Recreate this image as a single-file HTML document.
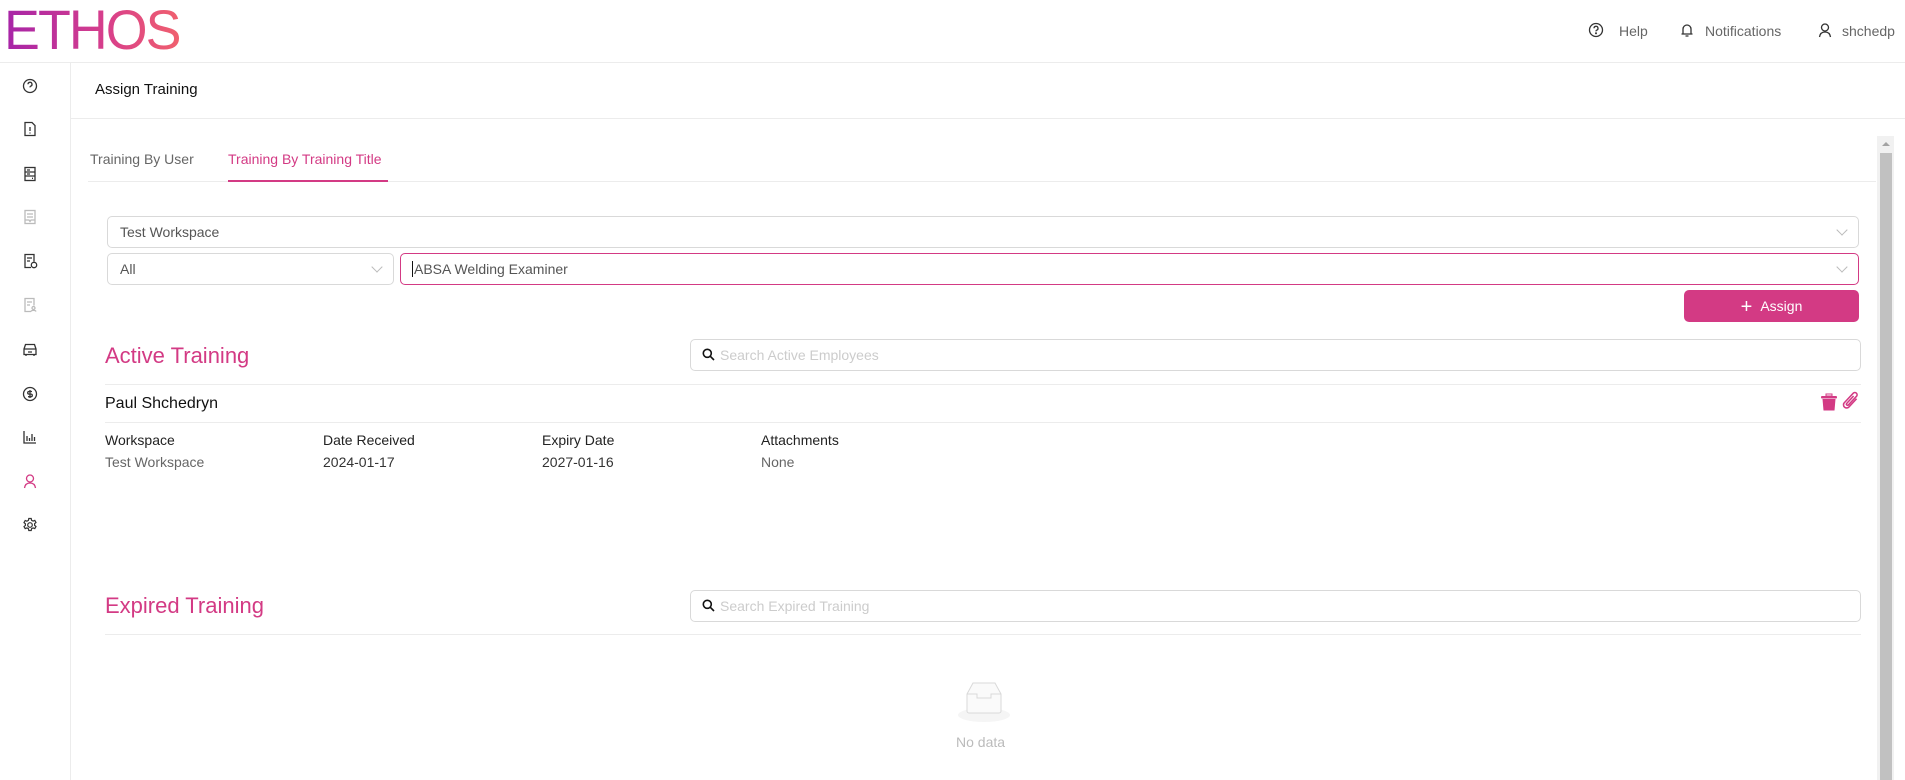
<!DOCTYPE html>
<html><head><meta charset="utf-8"><style>
*{box-sizing:border-box;margin:0;padding:0}
body{width:1905px;height:780px;overflow:hidden;background:#fff;font-family:"Liberation Sans",sans-serif;font-size:14px;color:#222;position:relative}
.a{position:absolute}
.line{position:absolute;height:1px;background:#ececec}
.box{position:absolute;border:1px solid #d9d9d9;border-radius:5px;background:#fff}
.chev{position:absolute;width:8px;height:8px;border-right:1px solid #bbb;border-bottom:1px solid #bbb;transform:rotate(45deg)}
.ico{position:absolute;left:22px}
.lbl{position:absolute;font-size:14px;color:#222}
.val{position:absolute;font-size:14px;color:#666}
</style></head><body>
<div class="a" style="left:4px;top:2px;font-size:56px;font-weight:400;letter-spacing:-2px;line-height:56px;background:linear-gradient(90deg,#a624a8,#d9408a 60%,#f0606e);-webkit-background-clip:text;background-clip:text;color:transparent;transform:scaleX(0.96);transform-origin:left">ETHOS</div>
<div class="line" style="left:0;top:62px;width:1905px"></div>
<div class="a" style="left:70px;top:62px;width:1px;height:718px;background:#ececec"></div>

<!-- header right -->
<svg class="a" style="left:1588px;top:22px" width="16" height="16" viewBox="0 0 16 16" fill="none" stroke="#333" stroke-width="1.3"><circle cx="8" cy="8" r="6.5"/><path d="M6 6.3a2 2 0 1 1 2.6 1.9c-.5.2-.6.6-.6 1.2"/><circle cx="8" cy="11.3" r=".4" fill="#333"/></svg>
<div class="a" style="left:1619px;top:23px;color:#666">Help</div>
<svg class="a" style="left:1679px;top:22px" width="16" height="16" viewBox="0 0 16 16" fill="none" stroke="#333" stroke-width="1.3"><path d="M4 12V7a4 4 0 0 1 8 0v5M2.5 12h11M6.5 14h3"/></svg>
<div class="a" style="left:1705px;top:23px;color:#666">Notifications</div>
<svg class="a" style="left:1817px;top:22px" width="16" height="16" viewBox="0 0 16 16" fill="none" stroke="#333" stroke-width="1.3"><circle cx="8" cy="5.5" r="3.5"/><path d="M2.5 15c.5-3.5 2.5-5 5.5-5s5 1.5 5.5 5"/></svg>
<div class="a" style="left:1842px;top:23px;color:#666">shchedp</div>

<!-- sidebar icons -->
<svg class="ico" style="top:78px" width="16" height="16" viewBox="0 0 16 16" fill="none" stroke="#333" stroke-width="1.3"><circle cx="8" cy="8" r="6.5"/><path d="M6 6.3a2 2 0 1 1 2.6 1.9c-.5.2-.6.6-.6 1.2"/></svg>
<svg class="ico" style="top:121px" width="16" height="16" viewBox="0 0 16 16" fill="none" stroke="#333" stroke-width="1.3"><path d="M3 1.5h7l3 3v10H3z M8 6v4M8 11.5v1"/></svg>
<svg class="ico" style="top:166px" width="16" height="16" viewBox="0 0 16 16" fill="none" stroke="#333" stroke-width="1.3"><rect x="3" y="1.5" width="10" height="13"/><path d="M3 6h10M3 10h10M5 4h3M5 8h3M10 12.3h1"/></svg>
<svg class="ico" style="top:209px" width="16" height="16" viewBox="0 0 16 16" fill="none" stroke="#bbb" stroke-width="1.3"><rect x="3" y="1.5" width="10" height="13"/><path d="M5 5h6M5 8h6M3 11h4l1 1.5 1-1.5h4"/></svg>
<svg class="ico" style="top:253px" width="16" height="16" viewBox="0 0 16 16" fill="none" stroke="#333" stroke-width="1.3"><path d="M9 14.5H3v-13h9v7M5 5h5M5 8h3"/><circle cx="12" cy="12" r="2.7"/></svg>
<svg class="ico" style="top:297px" width="16" height="16" viewBox="0 0 16 16" fill="none" stroke="#bbb" stroke-width="1.3"><path d="M9 14.5H3v-13h9v7M5 5h5M5 8h3"/><circle cx="11.5" cy="11" r="1.5"/><path d="M9 14.5c.5-1.5 4.5-1.5 5 0"/></svg>
<svg class="ico" style="top:341px" width="16" height="16" viewBox="0 0 16 16" fill="none" stroke="#333" stroke-width="1.3"><path d="M2 8l1.5-4.5h9L14 8v5.5H2zM2 8h12M4 13.5v1.5M12 13.5v1.5M6 11h4"/></svg>
<svg class="ico" style="top:386px" width="16" height="16" viewBox="0 0 16 16" fill="none" stroke="#333" stroke-width="1.3"><circle cx="8" cy="8" r="6.5"/><path d="M10 5.5H7a1.3 1.3 0 0 0 0 2.6h2a1.3 1.3 0 0 1 0 2.6H6M8 4v8"/></svg>
<svg class="ico" style="top:429px" width="16" height="16" viewBox="0 0 16 16" fill="none" stroke="#333" stroke-width="1.3"><path d="M2 2v12h12M5 12V7M7.5 12V9M10 12V5M12.5 12V8"/></svg>
<svg class="ico" style="top:473px" width="16" height="16" viewBox="0 0 16 16" fill="none" stroke="#d33a84" stroke-width="1.3"><circle cx="8" cy="5.5" r="3.5"/><path d="M2.5 15c.5-3.5 2.5-5 5.5-5s5 1.5 5.5 5"/></svg>
<svg class="ico" style="top:517px" width="16" height="16" viewBox="0 0 16 16" fill="none" stroke="#333" stroke-width="1.2"><circle cx="8" cy="8" r="2.3"/><path d="M6.8 1.5h2.4l.4 1.8 1.5.8 1.7-.7 1.2 2.1-1.4 1.2v1.6l1.4 1.2-1.2 2.1-1.700-.7-1.5.8-.4 1.8H6.8l-.4-1.8-1.5-.8-1.7.7L2 9.6l1.4-1.2V6.8L2 5.6l1.2-2.1 1.7.7 1.5-.8z"/></svg>

<!-- page title -->
<div class="a" style="left:95px;top:81px;font-size:15px;color:#111">Assign Training</div>
<div class="line" style="left:71px;top:118px;width:1834px"></div>

<!-- tabs -->
<div class="a" style="left:90px;top:151px;color:#666">Training By User</div>
<div class="a" style="left:228px;top:151px;color:#d33a84">Training By Training Title</div>
<div class="line" style="left:88px;top:181px;width:1788px"></div>
<div class="a" style="left:228px;top:180px;width:160px;height:2px;background:#d33a84"></div>

<!-- scrollbar -->
<div class="a" style="left:1877px;top:136px;width:17px;height:644px;background:#f1f1f1"></div>
<div class="a" style="left:1880px;top:153px;width:12px;height:627px;background:#c1c1c1"></div>
<div class="a" style="left:1882px;top:142px;width:0;height:0;border-left:4px solid transparent;border-right:4px solid transparent;border-bottom:4px solid #a3a3a3"></div>

<!-- selects -->
<div class="box" style="left:107px;top:216px;width:1752px;height:32px"></div>
<div class="a" style="left:120px;top:224px;color:#555">Test Workspace</div>
<div class="chev" style="left:1838px;top:226px"></div>
<div class="box" style="left:107px;top:253px;width:287px;height:32px"></div>
<div class="a" style="left:120px;top:261px;color:#555">All</div>
<div class="chev" style="left:373px;top:263px"></div>
<div class="box" style="left:400px;top:253px;width:1459px;height:32px;border-color:#d33a84"></div>
<div class="a" style="left:412px;top:261px;color:#555;border-left:1px solid #111;padding-left:1px">ABSA Welding Examiner</div>
<div class="chev" style="left:1838px;top:263px"></div>

<div class="a" style="left:1684px;top:290px;width:175px;height:32px;background:#d33a84;border-radius:5px;color:#fff;text-align:center;line-height:32px;font-size:14px"><span style="font-size:20px;vertical-align:-2px;margin-right:8px;font-weight:300">+</span>Assign</div>

<!-- active -->
<div class="a" style="left:105px;top:343px;font-size:22px;color:#d33a84">Active Training</div>
<div class="box" style="left:690px;top:339px;width:1171px;height:32px"></div>
<svg class="a" style="left:702px;top:348px" width="13" height="13" viewBox="0 0 13 13" fill="none" stroke="#111" stroke-width="1.6"><circle cx="5.3" cy="5.3" r="4"/><path d="M8.3 8.3L12 12"/></svg>
<div class="a" style="left:720px;top:347px;color:#ccc">Search Active Employees</div>
<div class="line" style="left:105px;top:384px;width:1756px"></div>
<div class="a" style="left:105px;top:395px;font-size:16px;color:#111">Paul Shchedryn</div>
<svg class="a" style="left:1820px;top:393px" width="18" height="18" viewBox="0 0 18 18" fill="#d33a84"><rect x="1" y="3" width="16" height="2.5" rx="1"/><rect x="6" y="1" width="6" height="2" fill="none" stroke="#d33a84" stroke-width="1"/><path d="M2.5 6h13l-1 11.5h-11z"/></svg>
<svg class="a" style="left:1841px;top:391px" width="19" height="21" viewBox="0 0 17 19" fill="none" stroke="#d33a84" stroke-width="1.4"><path d="M14 7l-7 7.5a2.8 2.8 0 0 1-4-4l8-8.5a2 2 0 0 1 2.9 2.8l-7.3 7.8a1 1 0 0 1-1.5-1.4l6.2-6.7"/></svg>
<div class="line" style="left:105px;top:422px;width:1756px"></div>
<div class="lbl" style="left:105px;top:432px">Workspace</div>
<div class="val" style="left:105px;top:454px">Test Workspace</div>
<div class="lbl" style="left:323px;top:432px">Date Received</div>
<div class="val" style="left:323px;top:454px;color:#333">2024-01-17</div>
<div class="lbl" style="left:542px;top:432px">Expiry Date</div>
<div class="val" style="left:542px;top:454px;color:#333">2027-01-16</div>
<div class="lbl" style="left:761px;top:432px">Attachments</div>
<div class="val" style="left:761px;top:454px">None</div>

<!-- expired -->
<div class="a" style="left:105px;top:593px;font-size:22px;color:#d33a84">Expired Training</div>
<div class="box" style="left:690px;top:590px;width:1171px;height:32px"></div>
<svg class="a" style="left:702px;top:599px" width="13" height="13" viewBox="0 0 13 13" fill="none" stroke="#111" stroke-width="1.6"><circle cx="5.3" cy="5.3" r="4"/><path d="M8.3 8.3L12 12"/></svg>
<div class="a" style="left:720px;top:598px;color:#ccc">Search Expired Training</div>
<div class="line" style="left:105px;top:634px;width:1756px"></div>
<svg class="a" style="left:957px;top:682px" width="54" height="42" viewBox="0 0 54 42"><ellipse cx="27" cy="33" rx="26" ry="7" fill="#f5f5f5"/><path d="M10 12L16 1h22l6 11v17a2 2 0 0 1-2 2H12a2 2 0 0 1-2-2z" fill="#fafafa" stroke="#d9d9d9"/><path d="M10 12h10v4h14v-4h10" fill="none" stroke="#d9d9d9"/></svg>
<div class="a" style="left:956px;top:734px;color:#bbb;font-size:14px">No data</div>
</body></html>
